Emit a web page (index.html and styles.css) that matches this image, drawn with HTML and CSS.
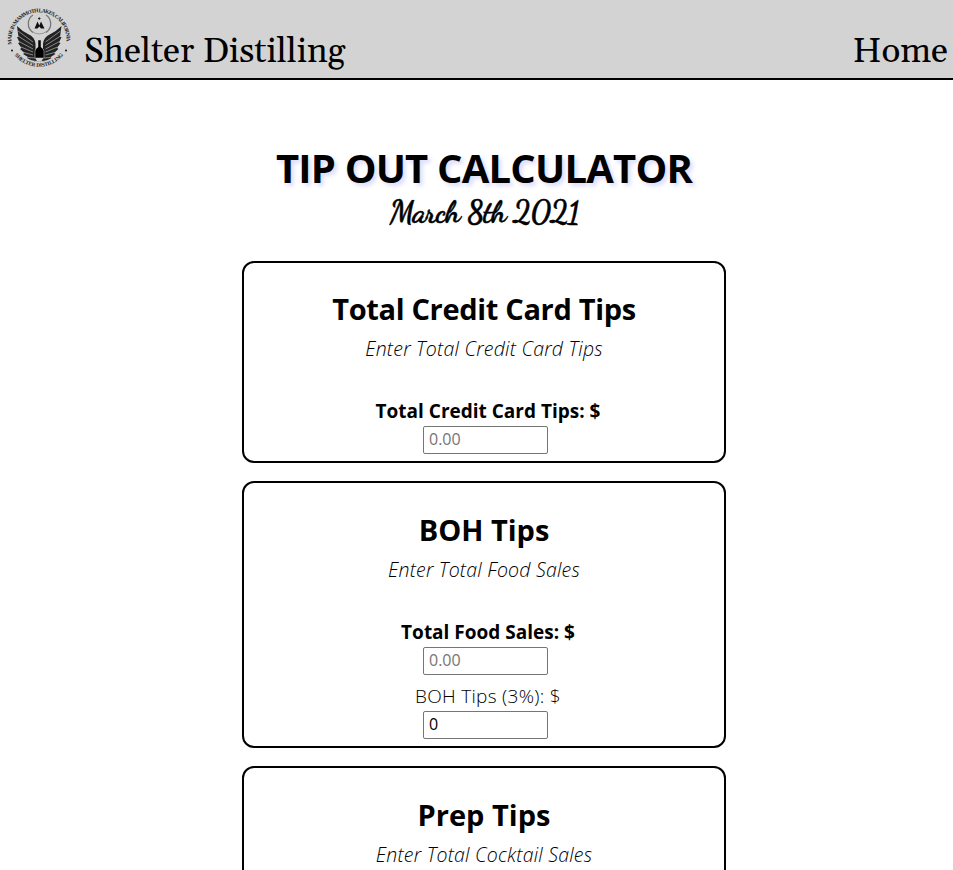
FILE: index.html
```html
<!DOCTYPE html>
<html lang="en">
<head>
<meta charset="utf-8">
<title>Tip Out Calculator</title>
<link rel="stylesheet" href="styles.css">
</head>
<body>
<header class="navbar">
  <svg class="logo" viewBox="0 0 64 64" role="img" aria-label="Shelter Distilling">
    <defs>
      <path id="ring-top" d="M4.800 38.500 A27.600 27.600 0 1 1 59.200 38.500"/>
      <path id="ring-bottom" d="M6.200 47 A31 31 0 0 0 57.800 47"/>
      <g id="wing">
        <path d="M10 20 Q15 25 21 28 Q28 31 28.500 38 L28.500 46 Q26.500 50 30 55 Q24 55 20 52 L21 51 L16 48 L17.500 47 L13 43 L14.500 42 L11 37 L12.500 36.500 L10 31 L11.500 31Z" fill="#222"/>
        <path d="M11 25 L26 36 M11 30 L26 39.500 M12 35.500 L26 43 M14 41 L26 46 M17 46.500 L26 49 M21 51.500 L28 52" stroke="#aaa" stroke-width=".75" fill="none"/>
      </g>
    </defs>
    <text class="ring"><textPath href="#ring-top" textLength="93">MADE IN MAMMOTH LAKES, CALIFORNIA</textPath></text>
    <text class="ring" text-anchor="middle"><textPath href="#ring-bottom" startOffset="50%" textLength="56">SHELTER DISTILLING</textPath></text>
    <use href="#wing"/>
    <use href="#wing" transform="matrix(-1 0 0 1 64.500 0)"/>
    <path d="M31 34 h3 v7 q3 2 3 4 v7 h-9 v-7 q0-2 3-4Z" fill="#000" stroke="#d3d3d3" stroke-width=".5"/>
    <path d="M26 9 A10.500 10.500 0 0 0 26 26.500 M39 9 A10.500 10.500 0 0 1 39 26.500" fill="none" stroke="#777" stroke-width="1.300"/>
    <path d="M25 25.500 A12 12 0 0 0 39.500 25.500" fill="none" stroke="#888" stroke-width=".8"/>
    <path d="M27.500 22.500 L30.500 15.500 L32.300 19.500 L34 15.500 L37.500 22.500 H34 L32.300 20.500 L30.500 22.500Z" fill="#111"/>
    <path d="M31 12.500 h2.500 M32.300 11.300 v2.500" stroke="#222"/>
    <path d="M27 55.500 h11" stroke="#999" stroke-width=".8" stroke-dasharray="1 .5"/>
    <circle cx="5" cy="44.500" r=".9"/><circle cx="59" cy="44.500" r=".9"/>
  </svg>
  <span class="brand">Shelter Distilling</span>
  <span class="home">Home</span>
</header>
<main class="page">
  <h1 class="title">TIP OUT CALCULATOR</h1>
  <p class="date">March 8th 2021</p>
  <section class="card card-first">
    <h2 class="h-credit">Total Credit Card Tips</h2>
    <p class="hint">Enter Total Credit Card Tips</p>
    <label class="strong" for="credit">Total Credit Card Tips: $</label>
    <input id="credit" placeholder="0.00">
  </section>
  <section class="card">
    <h2>BOH Tips</h2>
    <p class="hint">Enter Total Food Sales</p>
    <label class="strong" for="food">Total Food Sales: $</label>
    <input id="food" placeholder="0.00">
    <label class="result" for="boh">BOH Tips (3%): $</label>
    <input id="boh" value="0">
  </section>
  <section class="card">
    <h2>Prep Tips</h2>
    <p class="hint">Enter Total Cocktail Sales</p>
  </section>
</main>
</body>
</html>
```
FILE: styles.css
```css
* { box-sizing: border-box; }
html { height: 100%; overflow: hidden; }
body {
  margin: 0;
  height: 100%;
  overflow: hidden;
  background: #fff;
  color: #000;
  font-family: "Open Sans", "Noto Sans", sans-serif;
}
.navbar {
  display: flex;
  align-items: flex-start;
  height: 80px;
  padding: 6px 5px 0 7px;
  background: #d3d3d3;
  border-bottom: 2px solid #000;
  font-family: Gelasio, "Liberation Serif", serif;
  font-size: 35px;
  line-height: 44px;
  white-space: nowrap;
}
.logo { width: 64px; height: 64px; flex: none; }
.ring { font: bold 5.5px "Liberation Serif", serif; fill: #222; }
.brand { margin: 24px 0 0 13px; }
.home { margin: 24px 0 0 auto; }
.page {
  display: flex;
  flex-direction: column;
  align-items: center;
  width: 484px;
  margin: 61px 0 0 242px;
}
h1, h2, p { margin: 0; white-space: nowrap; }
.title {
  font-size: 40px;
  line-height: 54px;
  font-weight: 700;
  letter-spacing: -0.8px;
  text-shadow: 3px 3px 4px #dcdcfc;
}
.date {
  height: 66px;
  font: 700 31px/34px "Dancing Script", "Liberation Serif", cursive;
  letter-spacing: -0.95px;
  -webkit-text-stroke: 0.5px #000;
}
.card {
  display: flex;
  flex-direction: column;
  align-items: center;
  width: 100%;
  margin-bottom: 18px;
  padding: 27px 0 7px;
  border: 2px solid #000;
  border-radius: 12px;
}
.card-first { padding-top: 26px; }
h2 { font-size: 29px; line-height: 40px; font-weight: 700; }
.h-credit { letter-spacing: -0.33px; }
.hint {
  font-size: 19.5px;
  line-height: 26px;
  font-weight: 300;
  font-style: italic;
  letter-spacing: 0.22px;
  margin: 7px 0 36px;
}
label { font-size: 19px; line-height: 26px; margin: 0 0 2px 8px; white-space: nowrap; }
.strong { font-weight: 700; }
.result { font-weight: 300; letter-spacing: 0.3px; margin-top: 8px; }
input {
  width: 125px;
  height: 28px;
  margin-left: 3px;
  padding: 0 5px 2px;
  border: 1px solid #767676;
  border-radius: 2px;
  background: #fff;
  color: #000;
  font: 400 16px "Open Sans", sans-serif;
}
input::placeholder { color: #757575; opacity: 1; }
```
